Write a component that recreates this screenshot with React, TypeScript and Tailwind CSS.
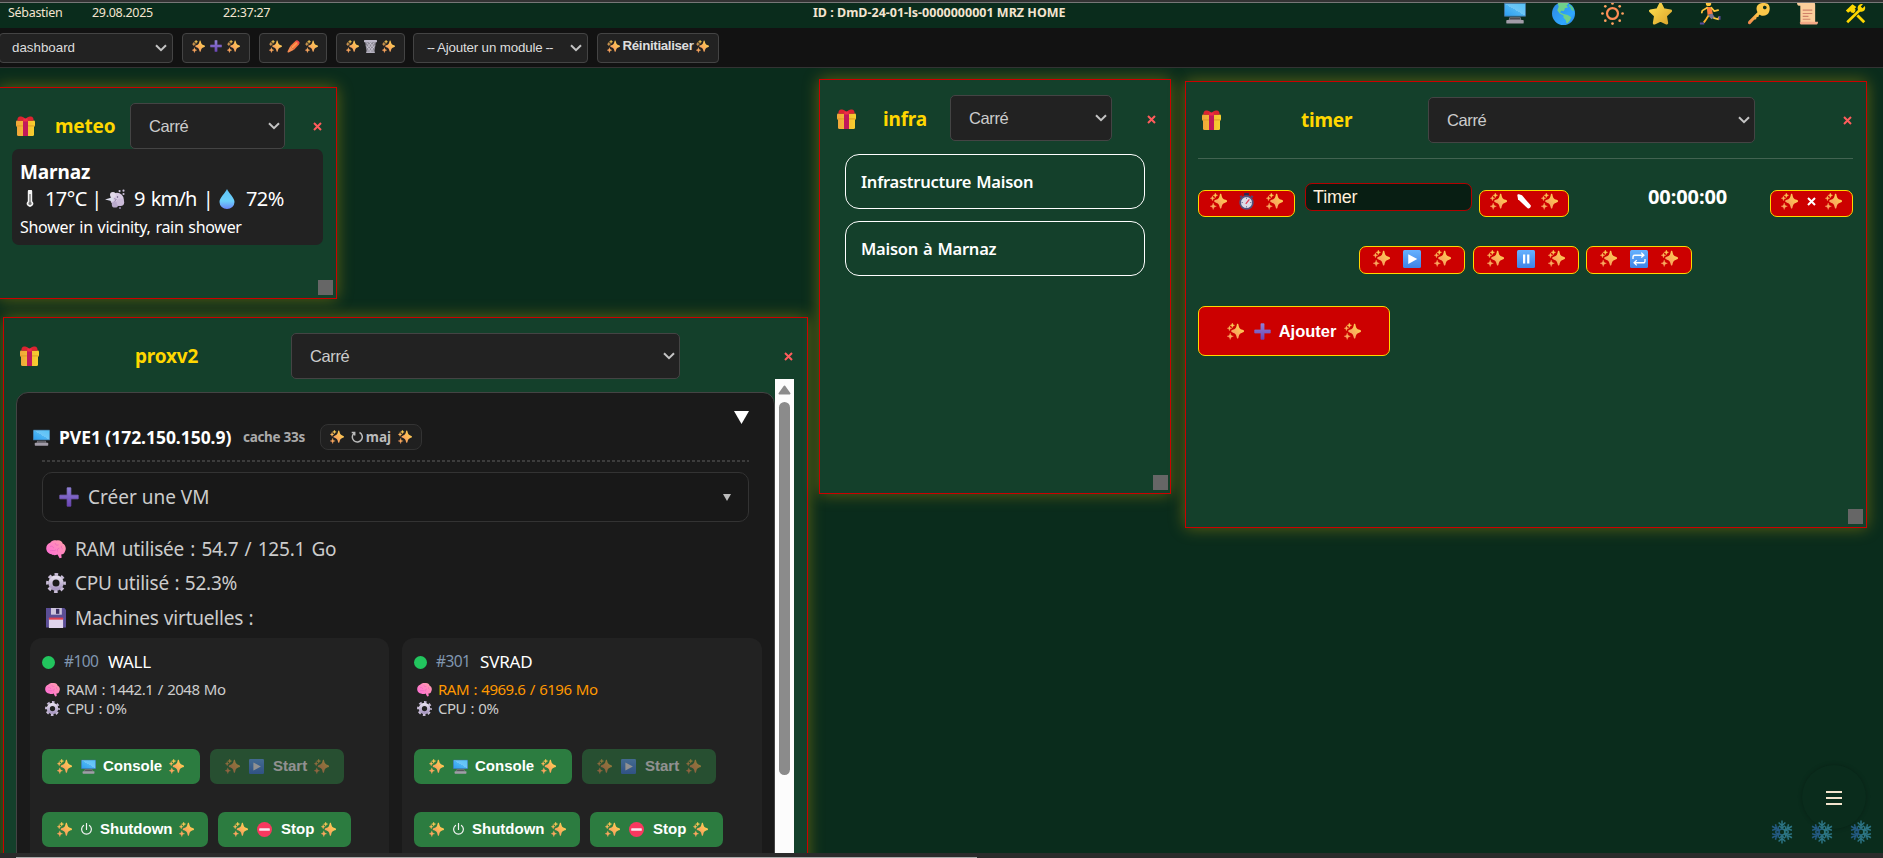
import React from "react";

type P = { className?: string };

const Defs = () => (
  <svg className="absolute size-0" aria-hidden="true">
    <defs>
      <linearGradient id="gSpark" x1="1" y1="0" x2="0" y2="1"><stop offset="0" stopColor="#ffdc4f" /><stop offset="1" stopColor="#f68e63" /></linearGradient>
      <linearGradient id="gScreen" x1="0" y1="1" x2="1" y2="0"><stop offset="0" stopColor="#2d9ff0" /><stop offset=".5" stopColor="#4db5f3" /><stop offset=".5" stopColor="#6fc6f7" /><stop offset="1" stopColor="#55c2f5" /></linearGradient>
      <linearGradient id="gPlus" x1="0" y1="0" x2="0" y2="1"><stop offset="0" stopColor="#8f7fd6" /><stop offset="1" stopColor="#6b45b5" /></linearGradient>
      <linearGradient id="gStar" x1="0" y1="0" x2="1" y2="1"><stop offset="0" stopColor="#ffe04f" /><stop offset="1" stopColor="#dba52d" /></linearGradient>
      <linearGradient id="gOcean" x1="0" y1="0" x2="1" y2="1"><stop offset="0" stopColor="#2f86e0" /><stop offset=".7" stopColor="#2fa8ff" /><stop offset="1" stopColor="#2878dd" /></linearGradient>
      <linearGradient id="gKey" x1="1" y1="0" x2="0" y2="1"><stop offset="0" stopColor="#ffdc45" /><stop offset="1" stopColor="#f07f4e" /></linearGradient>
      <linearGradient id="gDrop" x1="0" y1="0" x2="0" y2="1"><stop offset="0" stopColor="#5fc3f7" /><stop offset=".6" stopColor="#6cd0fb" /><stop offset="1" stopColor="#6a86f7" /></linearGradient>
      <linearGradient id="gBrain" x1="1" y1="0" x2="0" y2="1"><stop offset="0" stopColor="#ffa0a8" /><stop offset="1" stopColor="#ff66dc" /></linearGradient>
      <linearGradient id="gBlue" x1="0" y1="0" x2="0" y2="1"><stop offset="0" stopColor="#66b2ff" /><stop offset="1" stopColor="#3f83e6" /></linearGradient>
      <linearGradient id="gGear" x1="0" y1="0" x2="0" y2="1"><stop offset="0" stopColor="#e3dcec" /><stop offset="1" stopColor="#a998c2" /></linearGradient>
      <linearGradient id="gSnow" x1="0" y1="0" x2="1" y2="0"><stop offset="0" stopColor="#22557f" /><stop offset="1" stopColor="#2f7f86" /></linearGradient>
      <linearGradient id="gBox" x1="0" y1="0" x2="1" y2="0"><stop offset="0" stopColor="#f0a63a" /><stop offset="1" stopColor="#f7cf2e" /></linearGradient>
    </defs>
  </svg>
);

const Svg = ({ className = "", children }: P & { children: React.ReactNode }) => (
  <svg viewBox="0 0 24 24" className={`shrink-0 ${className}`} fill="none">{children}</svg>
);

const Spark = ({ className = "size-[15px]" }: P) => (
  <Svg className={className}>
    <g fill="url(#gSpark)">
      <path d="M15 1c.8 0 1 .7 1.300 2 .9 4 1.700 5.200 5.700 6.700 1.300.5 2 .7 2 1.800s-.7 1.300-2 1.800c-4 1.500-4.800 2.700-5.700 6.700-.3 1.300-.5 2-1.300 2s-1-.7-1.300-2c-.9-4-1.700-5.200-5.700-6.700-1.300-.5-2-.7-2-1.800s.7-1.300 2-1.800c4-1.500 4.800-2.700 5.700-6.700.3-1.300.5-2 1.300-2z" />
      <path d="M3.500 4c.5 2.400 1 2.900 3.300 3.500-2.300.6-2.800 1.100-3.300 3.500C3 8.600 2.500 8.100.2 7.500 2.500 6.900 3 6.400 3.500 4zM4.500 14c.7 3.200 1.500 4 4.500 4.700-3 .7-3.800 1.500-4.500 4.700C3.800 20.200 3 19.400 0 18.700c3-.7 3.800-1.500 4.500-4.700zM7.500 0l1 2.300 2.300 1-2.300 1-1 2.300-1-2.300-2.300-1 2.300-1z" stroke="url(#gSpark)" strokeWidth=".5" />
    </g>
  </Svg>
);
const Gift = ({ className = "h-5 w-[19px]" }: P) => (
  <svg viewBox="0 0 19 20" className={`shrink-0 ${className}`}>
    <path d="M1 9h17v9.500a1.500 1.500 0 0 1-1.500 1.500h-14A1.500 1.500 0 0 1 1 18.500z" fill="url(#gBox)" />
    <rect x="0" y="4.500" width="19" height="6" rx="1.300" fill="url(#gBox)" />
    <path d="M0 9.300h19v1.200H0z" fill="#d99526" opacity=".7" />
    <path d="M7 5h5v15H7z" fill="#c2185b" />
    <path d="M1.500 4.800C1 2 2.500.3 4.500.5 6.300.2 8 1.500 9.500 3 11 1.500 12.700.2 14.500.5 16.500.3 18 2 17.500 4.800z" fill="#dc2430" />
    <path d="M7.300 2.500h4.400v3H7.300z" fill="#f02c48" />
  </svg>
);
const Monitor = ({ className = "size-[15px]" }: P) => (
  <Svg className={className}>
    <rect x="0" y="1" width="24" height="15" rx="1" fill="#3f6f96" />
    <rect x="1" y="2" width="22" height="13" fill="url(#gScreen)" />
    <path d="M6 16.500h12l1 3H5z" fill="#7d7a83" /><rect x="6.500" y="17.500" width="11" height="1.300" fill="#4a4a50" />
    <rect x="2.500" y="19.500" width="19" height="4" rx="1" fill="#a19ca8" />
  </Svg>
);
const Plus = ({ className = "size-3" }: P) => (
  <Svg className={className}><path d="M9.800 1h4.400v8.800H23v4.400h-8.800V23H9.800v-8.800H1V9.800h8.800z" fill="url(#gPlus)" stroke="url(#gPlus)" strokeWidth="1" strokeLinejoin="round" /></Svg>
);
const Crayon = ({ className = "size-[13px]" }: P) => (
  <Svg className={className}>
    <path d="M6 11 16 1.500 22.500 8 13 18z" fill="#f5713c" /><path d="m15 2.500 2-1.700c2.500-1.700 7.500 3 6 5.800l-1.700 2z" fill="#ef4a4a" />
    <path d="M6 11 1 21c-.4 1 .9 2.400 2 2l10-5z" fill="#f58b52" /><path d="m8 13 10-9.500 2 2-10 10z" fill="#ff9a50" />
  </Svg>
);
const Trash = ({ className = "h-[13px] w-[13px]" }: P) => (
  <Svg className={className}>
    <path d="M2 3.500h20L19 23H5z" fill="#8d8a96" />
    <path d="m5 5 12 15M10 4l8.500 11M4 10l9 12M19 5 7 20M14 4 5.500 15M20 10l-9 12" stroke="#d5d2de" strokeWidth="1.300" />
    <rect x="0" y="0" width="24" height="4" rx="1" fill="#bdb8c8" /><rect x="4" y="21" width="16" height="3" rx="1" fill="#b6b2c0" />
  </Svg>
);
const Thermo = () => (
  <svg viewBox="0 0 8 17" className="h-[17px] w-2 shrink-0">
    <path d="M1.800 1.600a2.200 2.200 0 0 1 4.400 0v9.600a3.200 3.200 0 1 1-4.400 0z" fill="#f4f4f4" />
    <path d="M4 4v9" stroke="#666" strokeWidth="1.200" /><circle cx="4" cy="13.400" r="1.600" fill="#777" />
  </svg>
);
const Wind = () => (
  <Svg className="size-5">
    <circle cx="14.500" cy="12.500" r="8" fill="#d6c9e2" /><circle cx="9.500" cy="7" r="3.500" fill="#e2d9ea" /><circle cx="12" cy="18.500" r="3.800" fill="#b9a9cc" /><circle cx="18.500" cy="16" r="4.500" fill="#cbbbd9" />
    <path d="M0 12.500 10 9.500v5.500z" fill="#dcdcec" /><path d="m11 11.500 2.500 1-2 2.500" stroke="#9b8bb2" strokeWidth="1.200" /><circle cx="15" cy="9.500" r=".9" fill="#5d4d78" />
    <circle cx="17.500" cy="2.500" r="1.300" fill="#cabfd8" /><circle cx="22.200" cy="2" r="1.300" fill="#cabfd8" /><circle cx="22.200" cy="6" r="1.300" fill="#cabfd8" /><circle cx="18" cy="22.700" r="1.200" fill="#9585ad" />
  </Svg>
);
const Drop = () => (
  <svg viewBox="0 0 16 20" className="h-5 w-4 shrink-0"><path d="M8 0c1.500 4 7.500 8.500 7.500 13a7.500 7 0 0 1-15 0C.5 8.500 6.500 4 8 0z" fill="url(#gDrop)" /></svg>
);
const Globe = () => (
  <Svg className="size-[23px]">
    <circle cx="12" cy="12" r="12" fill="url(#gOcean)" />
    <path d="M6 1.600C9-.3 14-.4 17.500 1.400L15 4l2 1.500-3.500 1-1 3-3-.5-1 2 3.500 1.500 4.500 1 3.500 2.500-1.500 3.500-2.500 3c-1 .3-1.500-2-1.500-3.500l-2.500-2.500V14L8 12 5.500 8.500 7 5z" fill="#6fd08a" />
    <path d="m18.500 2.500 3 3 1.500 4-2.500-1-1.500-3-1.500-1z" fill="#5ac98a" />
  </Svg>
);
const Sun = () => (
  <Svg className="size-[23px]">
    <circle cx="12" cy="12" r="5.700" stroke="#ff8c55" strokeWidth="2.300" />
    <g fill="#ffa060"><circle cx="12" cy="1.500" r="1.400" /><circle cx="12" cy="22.500" r="1.400" /><circle cx="1.500" cy="12" r="1.400" /><circle cx="22.500" cy="12" r="1.400" /><circle cx="4.500" cy="4.500" r="1.400" /><circle cx="19.500" cy="4.500" r="1.400" /><circle cx="4.500" cy="19.500" r="1.400" /><circle cx="19.500" cy="19.500" r="1.400" /></g>
  </Svg>
);
const Star = () => (
  <Svg className="size-[23px]"><path d="m12 2 3 6 7.500 1.300-5.300 5 1.300 7.700L12 19l-6.500 3 1.300-7.700-5.300-5L9 8z" fill="url(#gStar)" stroke="url(#gStar)" strokeWidth="3" strokeLinejoin="round" /></Svg>
);
const Runner = () => (
  <Svg className="size-[23px]">
    <circle cx="11" cy="1.500" r="2.800" fill="#ffc83d" /><path d="m9 5 5 .5 1.500 7-5.500 1z" fill="#ff7b3e" />
    <path d="m9.500 6-5 3-.5 2M14 6l3 3.500 4-1" stroke="#ffc83d" strokeWidth="1.800" strokeLinecap="round" strokeLinejoin="round" />
    <path d="m10 13.500 5-1.500 2.500 4-3.500 2z" fill="#7d7390" /><path d="m16 16.500 5 1.500 1-2.500" stroke="#ffc83d" strokeWidth="1.800" />
    <path d="m11 14-2.500 4L6 21.500" stroke="#ffb52e" strokeWidth="2" /><path d="M22.500 14.500v4M2 22.500h4.500" stroke="#5a4a9a" strokeWidth="2" />
  </Svg>
);
const Key = () => (
  <Svg className="size-[23px]">
    <path d="m1.500 20 11-11 3 3-3 1.500-.5 2-2 .5-.5 2-2 .5-4 4.500c-1.500 1-3.500-1-2-3z" fill="url(#gKey)" />
    <path fillRule="evenodd" d="M11 3.500C13 .5 20 .2 22.300 2.500s1.700 8.500-1.300 10.500-6 2-8.500-.5S9 6 11 3.500zm6.800.5a1.900 1.900 0 1 0 2.500 2.500A1.900 1.900 0 0 0 17.800 4z" fill="#fcc84a" />
  </Svg>
);
const Scroll = () => (
  <Svg className="size-[23px]">
    <path d="M1 0h16.500c1.500 0 2.500 1 2.500 3v18H4.500V4H3C1.500 4 1 2 1 0z" fill="#fbcd9b" />
    <path d="M7 20.500h16c0 2-.8 3-2.500 3H6c-1.500 0-2-1-2-2.500z" fill="#f3aa86" />
    <path d="M7 8.500h10M7 12h10M7 15h6M7 18h8" stroke="#d0826a" strokeWidth="1.200" />
  </Svg>
);
const Tools = () => (
  <Svg className="size-[21px]">
    <path d="m8 8 14 14" stroke="#ffd700" strokeWidth="3.200" /><path d="M1 8.500 8.500 1.500 13 4.500l-2 2L12.500 8 8 11.500 6 9.500 3.500 11z" fill="#ffd700" />
    <path d="M2.500 22 17 8" stroke="#0a2c1c" strokeWidth="5" /><path d="M2.500 22 17 8" stroke="#ffd700" strokeWidth="3" />
    <path d="M20.500 1.500 18 4l2 2 2.700-2.500c1.300 4-1 6.500-3.700 6.500s-5-2.300-4.500-5 3-4.500 6-3.500z" fill="#ffd700" />
  </Svg>
);
const Brain = ({ className = "size-[15px]" }: P) => (
  <Svg className={className}>
    <path d="M.5 13C-.5 9 2 5 5 4.500 7 1.500 11 1.200 13 1.700c4-.7 6.500 1.500 7 3.800 3.500 1.500 4.800 6 2.800 9.500-1 3-3 3.500-4.500 3.500l.5 4-2.500.5-2.500-4.500c-3 1.500-6 .8-7.200-.2C4 18.500 1 16 .5 13z" fill="url(#gBrain)" />
    <path d="M5 9c2-1 4 0 4 2M11 5c0 2 2 3 4 2M16 11c-2 0-3 2-2 4M5 14c2-1 5 1 7-1M19 8c-1 1-1 3 1 4" stroke="#e864c0" strokeWidth=".9" />
  </Svg>
);
const Gear = ({ className = "size-[15px]" }: P) => (
  <Svg className={className}>
    <circle cx="12" cy="12" r="6.700" stroke="url(#gGear)" strokeWidth="5" />
    <circle cx="12" cy="12" r="10.300" stroke="#c9bdd8" strokeWidth="3.200" strokeDasharray="4.300 3.790" strokeDashoffset="2.100" />
  </Svg>
);
const Floppy = () => (
  <Svg className="size-5">
    <path d="M0 0h22l2 2v21.500H0z" fill="#5b4e96" /><path d="M6 0h13v8H6z" fill="#cdc3dd" /><path d="M12 1h4v6h-4z" fill="#3b2f62" /><path d="M3.500 12h17v12h-17z" fill="#e0d4ec" /><path d="M3.500 11.500h17V14h-17z" fill="#e0404f" />
  </Svg>
);
const Blue = ({ kind, className = "size-[18px]" }: P & { kind: "play" | "pause" | "loop" }) => (
  <Svg className={className}>
    <rect width="24" height="24" rx="2" fill="url(#gBlue)" />
    {kind === "play" && <path d="M7 5.500v13L19 12z" fill="#fff" />}
    {kind === "pause" && <path d="M8 6h3v12H8zM13.500 6h3v12h-3z" fill="#fff" />}
    {kind === "loop" && <path d="M4 12V9.500C4 8 5 7 6.500 7H18m-3-3.500L18.500 7 15 10M20 12v2.500c0 1.500-1 2.500-2.500 2.500H6m3-3.500L5.500 17 9 20.500" stroke="#fff" strokeWidth="1.800" />}
  </Svg>
);
const Stopwatch = () => (
  <Svg className="size-[17px]">
    <rect x="8.500" y="0" width="7" height="3.500" rx="1" fill="#2a2850" /><path d="m3 6 2.500-2M21 6l-2.500-2" stroke="#4a4878" strokeWidth="2.500" />
    <circle cx="12" cy="13.500" r="9" fill="#dcdce8" stroke="#52527e" strokeWidth="2.400" /><path d="M11 15.500 16 9" stroke="#e23c55" strokeWidth="1.800" />
    <path d="M12 6.500v2M12 18.500v2M5 13.500h2M17 13.500h2" stroke="#67678c" strokeWidth="1.200" />
  </Svg>
);
const WhitePencil = () => (
  <Svg className="size-[16px]"><path d="M2 2c0-1 1-2 2.500-1.500L9 2l13 15c1.500 2-2.500 6-4.500 4.500L3 8z" fill="#fff" /></Svg>
);
const NoEntry = () => (
  <Svg className="size-[15px]"><circle cx="12" cy="12" r="12" fill="#f8385f" /><rect x="3.500" y="10" width="17" height="4" rx="1" fill="#f6e9f0" /></Svg>
);
const Power = () => (
  <Svg className="size-[13px]"><path d="M12 1v11M6.500 4.500a9 9 0 1 0 11 0" stroke="#f2f2f2" strokeWidth="2.200" strokeLinecap="round" /></Svg>
);
const Snow = () => (
  <Svg className="size-6">
    <circle cx="12" cy="12" r="3" stroke="url(#gSnow)" strokeWidth="1.600" />
    {[0, 60, 120, 180, 240, 300].map((a) => (
      <path key={a} transform={`rotate(${a} 12 12)`} d="M12.010 9V.5M12 5.800 8.600 2.500M12 5.800l3.400-3.300M12 8 9 5.800M12 8l3-2.200" stroke={a > 180 ? "#245a82" : "#2c7484"} strokeWidth="1.500" />
    ))}
  </Svg>
);
const Cross = ({ className = "size-[9px] text-[#ff5c5c]" }: P) => (
  <svg viewBox="0 0 9 9" className={`shrink-0 ${className}`}><path d="m1 1 7 7M8 1 1 8" stroke="currentColor" strokeWidth="2" /></svg>
);
const Chevron = () => (
  <svg viewBox="0 0 12 8" className="ml-auto h-2 w-3 shrink-0"><path d="m1 1.200 5 5 5-5" fill="none" stroke="#c4c4c4" strokeWidth="2" /></svg>
);

const Shape = ({ className }: { className: string }) => (
  <button className={`flex h-[46px] shrink-0 items-center rounded-[5px] border border-[#444] bg-[#222] pr-[4px] pl-[18px] font-['Liberation_Sans',sans-serif] text-[16.500px] text-[#ccc] ${className}`}>
    <span className="tracking-[-0.4px]">Carré</span><Chevron />
  </button>
);
const Panel = ({ className, handle, children }: { className: string; handle?: string; children: React.ReactNode }) => (
  <section className={`absolute border border-[#cc0000] bg-[#14402b] shadow-[0_0_15px_rgba(255,200,0,0.35)] ${className}`}>
    {children}
    {handle && <span className={`absolute size-[15px] bg-[#666] ${handle}`} />}
  </section>
);
const Title = ({ className, children }: { className: string; children: string }) => (
  <h2 className={`shrink-0 text-[19px] leading-6 font-bold tracking-[-0.2px] whitespace-nowrap text-[#ffd700] ${className}`}>{children}</h2>
);
const Tool = ({ className, children }: { className: string; children: React.ReactNode }) => (
  <button className={`flex h-[30px] shrink-0 items-center justify-center rounded border border-[#444] bg-[#222] pb-[3px] ${className}`}>
    <Spark className="size-[13px]" />{children}<Spark className="size-[13px]" />
  </button>
);
const Red = ({ className, children }: { className: string; children: React.ReactNode }) => (
  <button className={`flex shrink-0 items-center justify-center rounded-[7px] border border-[#ffd700] bg-[#cc0000] ${className}`}>
    <Spark className="size-[17px]" />{children}<Spark className="size-[17px]" />
  </button>
);
const Green = ({ className, text, icon }: { className: string; text: string; icon: React.ReactNode }) => (
  <button className={`flex h-[35px] shrink-0 items-center rounded-[7px] bg-[#2c7c40] pl-[15px] text-white ${className}`}>
    <Spark /><span className="ml-[9px] flex">{icon}</span>
    <span className="ml-[7px] font-['Liberation_Sans',sans-serif] text-[15px] font-bold">{text}</span><Spark className="ml-[7px] size-[15px]" />
  </button>
);

const Vm = ({ id, name, ram, warn, className }: { id: string; name: string; ram: string; warn?: boolean; className: string }) => (
  <article className={`h-[260px] shrink-0 rounded-xl bg-[#222] pt-3 pl-3 ${className}`}>
    <div className="flex h-6 items-center">
      <span className="size-[13px] rounded-full bg-[#22c55e]" />
      <span className="ml-[9px] w-[44px] text-[15.500px] tracking-[-0.6px] text-[#8096b0]">{id}</span>
      <span className="text-[17px] tracking-[-0.2px] text-white">{name}</span>
    </div>
    <div className="mt-[6px] ml-[3px] flex h-[19px] items-center text-[15px] tracking-[-0.5px] [word-spacing:1px] text-[#ccc]">
      <Brain /><span className={warn ? "ml-[6px] text-[#ff9800]" : "ml-[6px]"}>{ram}</span>
    </div>
    <div className="ml-[3px] flex h-[19px] items-center text-[15px] tracking-[-0.5px] [word-spacing:1px] text-[#ccc]"><Gear /><span className="ml-[6px]">CPU : 0%</span></div>
    <div className="mt-[31px] flex gap-[10px]">
      <Green className="w-[158px]" text="Console" icon={<Monitor />} />
      <Green className="w-[134px] opacity-50" text="Start" icon={<span className="mr-[2px] flex"><Blue kind="play" className="size-[15px]" /></span>} />
    </div>
    <div className="mt-7 flex gap-[10px]">
      <Green className="w-[166px]" text="Shutdown" icon={<span className="-ml-px flex"><Power /></span>} />
      <Green className="w-[133px]" text="Stop" icon={<span className="mr-[2px] flex"><NoEntry /></span>} />
    </div>
  </article>
);

export default function App() {
  return (
    <div className="relative flex h-[858px] w-[1883px] flex-col overflow-hidden bg-[#0a2c1c] font-['Noto_Sans',sans-serif] text-white">
      <Defs />
      <div className="z-10 h-[3px] shrink-0 border-b border-[#777] bg-[#333]" />
      <header className="flex h-[25px] shrink-0 items-center overflow-hidden pb-[5px] text-[12.500px] tracking-[-0.3px] text-[#f3e4d0]">
        <span className="ml-2 w-[84px]">Sébastien</span>
        <span className="w-[131px]">29.08.2025</span>
        <span className="w-[590px]">22:37:27</span>
        <span className="w-[691px] font-bold tracking-[0px]">ID : DmD-24-01-ls-0000000001 MRZ HOME</span>
        <nav className="flex items-center gap-[25.800px]">
          <Monitor className="size-[22px]" /><Globe /><Sun /><Star /><Runner /><Key /><Scroll /><Tools />
        </nav>
      </header>
      <div className="flex h-10 shrink-0 items-center border-b border-[#333] bg-[#121212] font-['Liberation_Sans',sans-serif] text-[13.330px] text-[#ddd]">
        <button className="-ml-px flex h-[30px] w-[174px] items-center rounded border border-[#444] bg-[#222] pr-[5px] pl-3">dashboard<Chevron /></button>
        <Tool className="ml-[9px] w-[68px] gap-[5px]"><Plus /></Tool>
        <Tool className="ml-[9px] w-[68px] gap-[5px]"><Crayon /></Tool>
        <Tool className="ml-[9px] w-[69px] gap-[5px]"><Trash /></Tool>
        <button className="ml-2 flex h-[30px] w-[175px] items-center rounded border border-[#444] bg-[#222] pr-[5px] pl-[13px]">
          <span className="tracking-[-1px]">--</span><span className="mx-[3px] tracking-[-0.15px]">Ajouter un module</span><span className="tracking-[-1px]">--</span><Chevron />
        </button>
        <Tool className="ml-[9px] w-[122px] gap-[2px]"><span className="font-bold tracking-[-0.35px]">Réinitialiser</span></Tool>
      </div>

      <main className="relative h-[785px] shrink-0 overflow-hidden">
        <Panel className="top-[19px] -left-0.5 h-[212px] w-[339px]" handle="right-[3px] bottom-[3px]">
          <div className="flex items-center pt-[15px] pl-[17px]">
            <Gift /><Title className="ml-5 w-[75px]">meteo</Title><Shape className="w-[155px]" /><Cross className="ml-7 size-[9px] text-[#ff5c5c]" />
          </div>
          <div className="ml-[13px] h-24 w-[311px] rounded-[7px] bg-[#222] pt-[10px] pl-2 whitespace-nowrap">
            <p className="h-[26px] text-[19px] leading-[27px] font-bold tracking-[-0.1px]">Marnaz</p>
            <p className="flex h-[27px] items-center pl-[6px] text-[20px] leading-[27px] tracking-[-0.6px]">
              <Thermo /><span className="ml-[11px] w-[60px]">17°C |</span><Wind /><span className="ml-[9px] w-[85px] [word-spacing:2px] tracking-[-0.9px]">9 km/h |</span><Drop /><span className="ml-[11px]">72%</span>
            </p>
            <p className="pt-px text-[16px] leading-[28px] tracking-[-0.3px] [word-spacing:1px]">Shower in vicinity, rain shower</p>
          </div>
        </Panel>

        <Panel className="top-[249px] left-[3px] h-[560px] w-[805px]">
          <div className="flex items-center pt-[15px] pl-4">
            <Gift /><Title className="ml-[96px] w-[156px]">proxv2</Title><Shape className="w-[389px]" /><Cross className="ml-[104px] size-[9px] text-[#ff5c5c]" />
          </div>
          <div className="flex">
            <div className="mt-[13px] ml-3 h-[500px] w-[759px] shrink-0 rounded-t-xl border border-[#444] bg-[#1a1a1a]">
              <div className="flex h-[67px] items-start">
                <div className="mt-[31px] flex h-[26px] w-[717px] items-center pl-4">
                  <Monitor className="size-[17px]" />
                  <span className="ml-[9px] w-[184px] text-[17.500px] font-bold tracking-[-0.05px] whitespace-nowrap">PVE1 (172.150.150.9)</span>
                  <span className="w-[77px] pt-px text-[13.500px] font-bold tracking-[-0.3px] text-[#aaa]">cache 33s</span>
                  <button className="flex h-[26px] w-[102px] shrink-0 items-center justify-center gap-[7px] rounded-lg border border-[#333] bg-[#202020] text-[13.500px] font-bold text-[#bbb]">
                    <Spark className="size-[14px]" />
                    <span className="flex items-center gap-[3px]">
                      <svg viewBox="0 0 12 12" className="size-3"><path d="M8.500 1.500a5 5 0 1 1-5.500.7M.7 1.500h3v3" fill="none" stroke="#bbb" strokeWidth="1.500" /></svg>maj
                    </span>
                    <Spark className="size-[14px]" />
                  </button>
                </div>
                <svg viewBox="0 0 15 13" className="mt-[18px] h-[13px] w-[15px]"><path d="M0 0h15L7.500 13z" fill="#fff" /></svg>
              </div>
              <div className="mx-[25px] h-0.5 w-[707px] bg-[repeating-linear-gradient(90deg,#3c3c3c_0_3px,transparent_3px_5px)]" />
              <div className="mt-[10px] ml-[25px] flex h-[50px] w-[707px] items-center rounded-[10px] border border-[#333] bg-[#181818] px-4 text-[19px] text-[#ccc]">
                <Plus className="size-5" /><span className="ml-[9px] pt-px">Créer une VM</span>
                <svg viewBox="0 0 8 7" className="mr-px ml-auto h-[7px] w-2"><path d="M0 0h8L4 7z" fill="#bbb" /></svg>
              </div>
              <div className="mt-[9.500px] ml-[29px] text-[19px] tracking-[-0.2px] text-[#ccc]">
                {[
                  { i: <Brain className="size-5" />, t: "RAM utilisée : 54.7 / 125.1 Go", c: "[word-spacing:1.500px]" },
                  { i: <Gear className="size-5" />, t: "CPU utilisé : 52.3%", c: "[word-spacing:0.700px]" },
                  { i: <Floppy />, t: "Machines virtuelles :", c: "[word-spacing:0.500px]" },
                ].map(({ i, t, c }) => (
                  <p key={t} className="flex h-[34.500px] items-center gap-[9px]">{i}<span className={c}>{t}</span></p>
                ))}
              </div>
              <div className="mt-[3px] ml-[13px] flex gap-[13px]">
                <Vm className="w-[359px]" id="#100" name="WALL" ram="RAM : 1442.1 / 2048 Mo" />
                <Vm className="w-[360px]" id="#301" name="SVRAD" ram="RAM : 4969.6 / 6196 Mo" warn />
              </div>
            </div>
            <div className="flex h-[520px] w-[19px] flex-col items-center bg-[#fcfcfc] pt-[6px]">
              <svg viewBox="0 0 13 10" className="h-[10px] w-[13px]"><path d="M6.500 1.500 11.500 8.500h-10z" fill="#8b8b8b" stroke="#8b8b8b" strokeWidth="2" strokeLinejoin="round" /></svg>
              <div className="mt-[7px] h-[373px] w-[11px] rounded-full bg-[#8b8b8b]" />
            </div>
          </div>
        </Panel>

        <Panel className="top-[11px] left-[819px] h-[415px] w-[352px]" handle="right-[2px] bottom-[3px]">
          <div className="flex items-center pt-[15px] pl-[17px]">
            <Gift className="mt-0.5 h-5 w-[19px]" /><Title className="mt-0.5 ml-[27px] w-[67px]">infra</Title><Shape className="w-[162px]" /><Cross className="mt-0.5 ml-[35px] size-[9px] text-[#ff5c5c]" />
          </div>
          <div className="mt-[13px] ml-[25px] flex w-[300px] flex-col gap-3 text-[16.500px] font-semibold tracking-[-0.25px] [word-spacing:1px]">
            {["Infrastructure Maison", "Maison à Marnaz"].map((t) => (
              <div key={t} className="flex h-[55px] items-center rounded-[14px] border border-white pt-px pl-[15px]">{t}</div>
            ))}
          </div>
        </Panel>

        <Panel className="top-[13px] left-[1185px] h-[447px] w-[682px]" handle="right-[3px] bottom-[3px]">
          <div className="flex items-center pt-[15px] pl-4">
            <Gift /><Title className="ml-[80px] w-[127px]">timer</Title><Shape className="w-[327px]" /><Cross className="ml-[88px] size-[9px] text-[#ff5c5c]" />
          </div>
          <div className="mt-[15px] ml-3 h-px w-[655px] bg-[#426351]" />
          <div className="mt-6 ml-3 flex w-[655px] items-start">
            <Red className="mt-[7px] h-[27px] w-[97px] gap-[11px] pb-1"><Stopwatch /></Red>
            <div className="ml-[10px] flex h-[28px] w-[167px] items-center rounded-[7px] border border-[#b30000] bg-[#081e13] pl-[7px] font-['Liberation_Sans',sans-serif] text-[18px] tracking-[-0.2px] text-[#fff0dc]">Timer</div>
            <Red className="mt-[7px] ml-[7px] h-[27px] w-[90px] gap-[9px] pb-1"><WhitePencil /></Red>
            <span className="ml-[79px] w-[122px] text-[20px] leading-[27px] font-bold tracking-[-0.1px]">00:00:00</span>
            <Red className="mt-[7px] h-[27px] w-[83px] gap-[9px] pb-1"><Cross className="size-[9px] text-white" /></Red>
          </div>
          <div className="mt-[29px] ml-[173px] flex gap-[7.500px]">
            <Red className="h-7 w-[106px] gap-[13px] pb-[3px]"><Blue kind="play" /></Red>
            <Red className="h-7 w-[106px] gap-[13px] pb-[3px]"><Blue kind="pause" /></Red>
            <Red className="h-7 w-[106px] gap-[13px] pb-[3px]"><Blue kind="loop" /></Red>
          </div>
          <Red className="mt-8 ml-3 h-[50px] w-[192px] gap-[8px]">
            <Plus className="ml-[2px] size-[17px]" /><span className="font-['Liberation_Sans',sans-serif] text-[16.500px] font-bold">Ajouter</span>
          </Red>
        </Panel>

        <button className="absolute top-[697px] left-[1802px] flex size-16 flex-col items-center justify-center gap-[4px] rounded-full bg-[#0a2c1c] pt-px shadow-[0_0_4px_rgba(0,0,0,0.25)]">
          <i className="h-[2px] w-4 bg-[#f3e4cd]" /><i className="h-[2px] w-4 bg-[#f3e4cd]" /><i className="h-[2px] w-4 bg-[#f3e4cd]" />
        </button>
        <div className="absolute right-[10px] bottom-[9px] flex gap-[15.500px]"><Snow /><Snow /><Snow /></div>
      </main>
      <footer className="h-[5px] shrink-0 bg-[#2b2b2b] pt-1"><div className="ml-4 h-px w-[961px] bg-[#aaa]" /></footer>
    </div>
  );
}
